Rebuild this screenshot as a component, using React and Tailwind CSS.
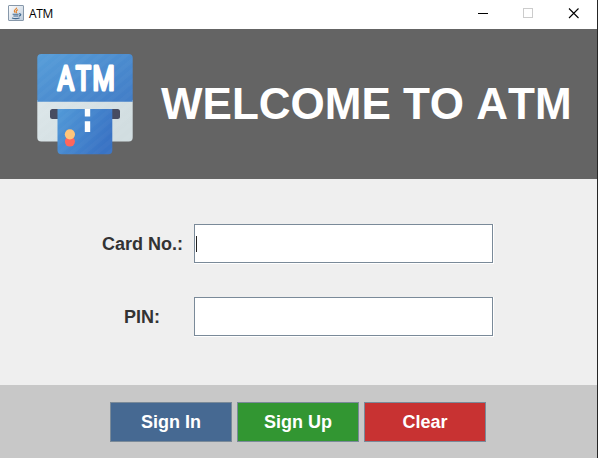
import React from 'react';

function JavaIcon() {
  return (
    <svg width="16" height="16" viewBox="0 0 16 16" fill="none">
      <defs>
        <linearGradient id="tile" x1="0" y1="0" x2="1" y2="1">
          <stop offset="0" stopColor="#ffffff" />
          <stop offset="1" stopColor="#bccbdb" />
        </linearGradient>
      </defs>
      <rect x="0.5" y="0.5" width="15" height="15" rx="0.5" fill="url(#tile)" stroke="#8798aa" />
      <path d="M8.6 2.6C9 4.1 6 4.7 6.3 6.1c.1.6.7 1 .9 1.7M10 4.8C8.3 5.5 7.6 6.2 8.5 7.1c.3.4 0 .8-.3 1.1" stroke="#e0822d" strokeWidth="1.1" />
      <path d="M4.6 9.2h6M5.4 11h4.8M4 13c2 .7 5.5.7 7.6-.1M11 8.9c2.4-.5 2.4 1.7-.2 2.3" stroke="#42698f" strokeWidth="1.1" />
    </svg>
  );
}

function AtmIcon() {
  return (
    <svg className="shrink-0" width="96" height="101" viewBox="0 0 96 101">
      <defs>
        <linearGradient id="blue" x1="0" y1="0" x2="1" y2="0.8">
          <stop offset="0" stopColor="#579ed9" />
          <stop offset="1" stopColor="#437fc8" />
        </linearGradient>
        <linearGradient id="pale" x1="0" y1="0" x2="1" y2="0.5">
          <stop offset="0" stopColor="#dce6e9" />
          <stop offset="1" stopColor="#d1dde0" />
        </linearGradient>
        <linearGradient id="card" x1="0" y1="0" x2="1" y2="0.5">
          <stop offset="0" stopColor="#529ad8" />
          <stop offset="1" stopColor="#3973c4" />
        </linearGradient>
        <pattern id="stripes" width="8" height="8" patternUnits="userSpaceOnUse" patternTransform="rotate(50)">
          <rect width="4" height="8" fill="#ffffff" opacity="0.025" />
        </pattern>
      </defs>
      <path d="M0.3 46h95.4v37.5a4 4 0 0 1-4 4H4.3a4 4 0 0 1-4-4z" fill="url(#pale)" />
      <path d="M4.3 0h87.4a4 4 0 0 1 4 4v43.7H0.3V4a4 4 0 0 1 4-4z" fill="url(#blue)" />
      <rect x="0.3" y="0" width="95.4" height="87.5" rx="4" fill="url(#stripes)" />
      <rect x="13" y="55" width="70" height="10" rx="2.5" fill="#474c61" />
      <path d="M20.5 55h54.8v41.3a4 4 0 0 1-4 4H24.5a4 4 0 0 1-4-4z" fill="url(#card)" />
      <path d="M20.5 55h54.8v41.3a4 4 0 0 1-4 4H24.5a4 4 0 0 1-4-4z" fill="url(#stripes)" />
      <path d="M47.8 55h5.4v7.5h-5.4zM47.8 67.3h5.4v10.8h-5.4z" fill="#fff" />
      <circle cx="32.9" cy="87.6" r="5" fill="#ff665b" />
      <circle cx="32.9" cy="80.3" r="5.1" fill="#ffc57a" />
      <text
        className="font-['Roboto',sans-serif] font-normal tracking-[2px] [font-kerning:none]"
        transform="translate(20.6 36) scale(0.76 1)"
        fontSize="33.5"
        fill="#fff"
        stroke="#fff"
        strokeWidth="3"
        strokeLinejoin="round"
        strokeLinecap="round"
      >
        ATM
      </text>
    </svg>
  );
}

function Field({ label, labelClass, type, autoFocus }) {
  return (
    <div className="flex h-10 items-center">
      <label className={`${labelClass} w-[194px] shrink-0 text-[18px] leading-[22px] font-bold whitespace-nowrap text-[#333333]`}>
        {label}
      </label>
      <div className="flex h-10 w-[300px] items-center border-r border-b border-white">
        <div className="flex h-[39px] w-[299px] items-center border border-[#7a8a99] bg-white pl-px">
          {autoFocus && <span className="h-4 w-px shrink-0 bg-[#222]" />}
          <input type={type} aria-label={label} className="h-full min-w-0 flex-1 bg-transparent outline-none" />
        </div>
      </div>
    </div>
  );
}

function Button({ children, color }) {
  return (
    <button className={`${color} h-10 w-[122px] border border-[#7a8a99] text-[18px] leading-[22px] font-bold text-white`}>
      {children}
    </button>
  );
}

export default function App() {
  return (
    <div className="flex h-[458px] w-[598px] flex-col overflow-hidden border-r border-[#262626] bg-[#efefef] font-['Liberation_Sans',Arial,sans-serif] [font-kerning:none]">
      <header className="flex h-[29px] shrink-0 items-center bg-white pl-2">
        <div className="flex flex-1 items-center gap-[5px] pb-[3px]">
          <JavaIcon />
          <span className="pt-px font-['Open_Sans',sans-serif] text-[12px] leading-4 tracking-[-0.4px] text-black">ATM</span>
        </div>
        <svg width="138" height="29" viewBox="0 0 138 29" fill="none" className="shrink-0">
          <path d="M19 13.5h10" stroke="#000" />
          <rect x="64.5" y="8.5" width="9" height="9" stroke="#ccc" />
          <path d="M110 8.5l9.5 9.5M119.5 8.5L110 18" stroke="#000" strokeWidth="1.1" />
        </svg>
      </header>

      <section className="flex h-[150px] shrink-0 items-center gap-7 bg-[#646464] pl-[37px]">
        <AtmIcon />
        <h1 className="text-[44px] leading-[50px] font-bold whitespace-nowrap text-white">WELCOME TO ATM</h1>
      </section>

      <main className="flex h-[206px] shrink-0 flex-col gap-[33px] pt-[45px]">
        <Field label="Card No.:" labelClass="pl-[102px]" type="text" autoFocus />
        <Field label="PIN:" labelClass="pl-[124px]" type="password" />
      </main>

      <footer className="flex h-[73px] shrink-0 gap-[5px] bg-[#c8c8c8] pt-[17px] pl-[110px]">
        <Button color="bg-[#466992]">Sign In</Button>
        <Button color="bg-[#329632]">Sign Up</Button>
        <Button color="bg-[#c83232]">Clear</Button>
      </footer>
    </div>
  );
}
